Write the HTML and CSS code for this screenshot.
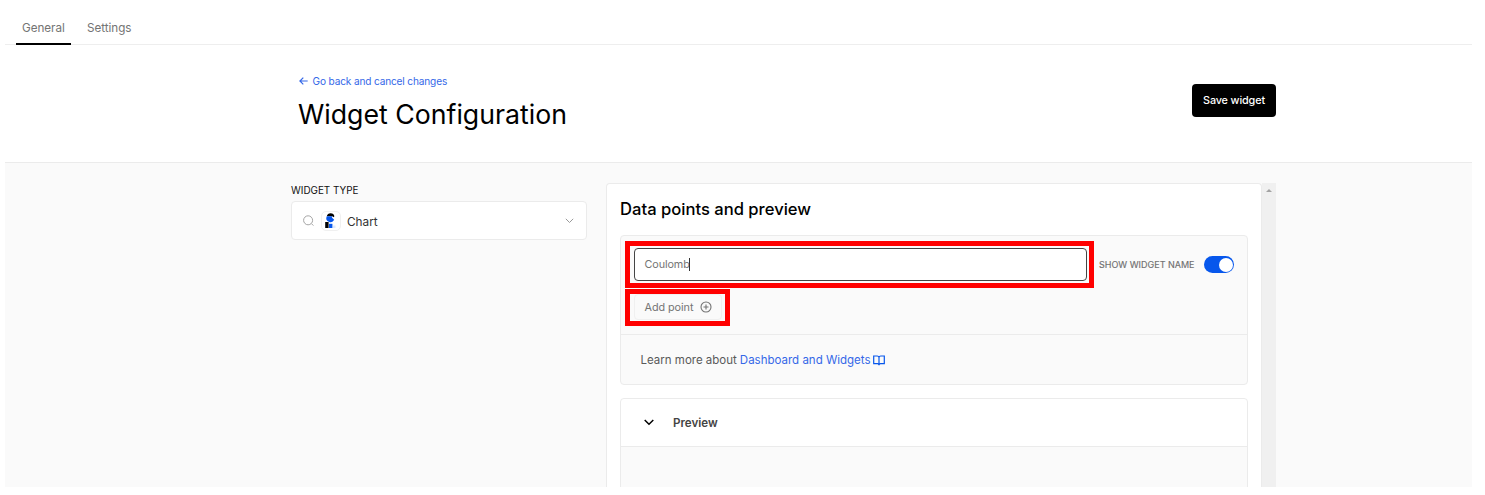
FILE: index.html
```html
<!DOCTYPE html>
<html lang="en">
<head>
<meta charset="utf-8">
<title>Widget Configuration</title>
<link rel="stylesheet" href="styles.css">
</head>
<body>
<div class="app">
  <nav class="tabs">
    <a class="tab active">General</a>
    <a class="tab">Settings</a>
  </nav>
  <header class="header">
    <div class="heading">
      <a class="back">
        <svg width="9" height="8" viewBox="0 0 9 8" fill="none" stroke="currentColor" stroke-width="1.2"><path d="M8.7 4H1M4.3.6L.9 4l3.4 3.4"/></svg>
        <span>Go back and cancel changes</span>
      </a>
      <h1>Widget Configuration</h1>
    </div>
    <button class="save">Save widget</button>
  </header>
  <main class="content">
    <aside class="side">
      <label class="label">WIDGET TYPE</label>
      <div class="select">
        <svg class="search" width="12" height="12" viewBox="0 0 12 12" fill="none" stroke="#a5a5a5"><circle cx="5.1" cy="5.3" r="4.5"/><path d="M8.4 8.6l2 2"/></svg>
        <span class="chart-icon">
          <svg width="18" height="18" viewBox="0 0 18 18"><path d="M4.8 4.2Q5.4 1.2 8.6 1.2T12.4 4.2L11.4 5.2 10.4 4.2z" fill="#000"/><path d="M4.8 4.2h5.6l-.6 1.4 2.4 2.2A4 4 0 0 1 4.8 4.2z" fill="#0757ec"/><path d="M3.2 10h3.4v6H3.2z" fill="#000"/><path d="M7 11.8h3.4V16H7z" fill="#0757ec"/><path d="M11 13.5h2.5V16H11z" fill="#dce9ff"/></svg>
        </span>
        <span class="select-text">Chart</span>
        <svg class="caret" width="9" height="6" viewBox="0 0 9 6" fill="none" stroke="#999"><path d="M.8.8l3.7 3.7L8.2.8"/></svg>
      </div>
    </aside>
    <section class="panel">
      <h2>Data points and preview</h2>
      <div class="card">
        <div class="editor">
          <div class="name-row">
            <div class="mark mark-input"><div class="input"><span>Coulomb</span><i class="cursor"></i></div></div>
            <span class="switch-label">SHOW WIDGET NAME</span>
            <span class="switch"><i class="knob"></i></span>
          </div>
          <div class="mark mark-button">
            <button class="add"><span>Add point</span>
              <svg width="12" height="12" viewBox="0 0 12 12" fill="none" stroke="#747474" stroke-width="1.1"><circle cx="6" cy="6" r="5"/><path d="M3.5 6h5M6 3.5v5"/></svg>
            </button>
          </div>
        </div>
        <div class="learn">
          <span class="learn-text">Learn more about</span>
          <a class="learn-link">Dashboard and Widgets</a>
          <svg width="12" height="11" viewBox="0 0 12 11" fill="none" stroke="#0757ec" stroke-width="1.2"><path d="M6 2.2C5.7 1.3 5.2 1 4.3 1H.7v7.7h3.8c.8 0 1.3.4 1.5 1.3.2-.9.7-1.3 1.5-1.3h3.8V1H7.7C6.8 1 6.3 1.3 6 2.2zM6 2.2V10"/></svg>
        </div>
      </div>
      <div class="card preview">
        <div class="preview-head">
          <svg width="10" height="7" viewBox="0 0 10 7" fill="none" stroke="#000" stroke-width="1.5"><path d="M.7 1L5 5.2 9.3 1"/></svg>
          <span>Preview</span>
        </div>
      </div>
    </section>
    <div class="scrollbar"><i class="arrow"></i></div>
  </main>
</div>
</body>
</html>
```

FILE: styles.css
```css
* { box-sizing: border-box; }
body { margin: 0; background: #fff; font-family: Inter, "Liberation Sans", sans-serif; color: #000; }
h1, h2 { margin: 0; }
button { font-family: inherit; border: 0; padding: 0; }
svg { display: block; flex: none; }
span { white-space: nowrap; }
.app { display: flex; flex-direction: column; margin: 0 13px 0 5px; height: 487px; overflow: hidden; }
.tabs { display: flex; flex: none; height: 45px; padding-left: 10.5px; gap: 10px; border-bottom: 1px solid #eee; }
.tab { height: 45px; padding: 20px 6.5px 0; font-size: 11.7px; line-height: 16px; letter-spacing: -.04px; color: #747474; }
.active { width: 55px; border-bottom: 2px solid #000; }
.header { display: flex; flex: none; justify-content: space-between; height: 118px; padding: 29px 196px 0 293px; border-bottom: 1px solid #ebebeb; }
.back { display: flex; align-items: center; gap: 4.6px; height: 14px; padding-left: 1px; font-size: 10.1px; letter-spacing: -.15px; color: #3568e8; }
h1 { margin-top: 8px; font-size: 26.7px; line-height: 36px; font-weight: 400; white-space: nowrap; }
.save { width: 84px; height: 33px; margin-top: 10px; padding-bottom: 1px; border-radius: 4px; background: #000; color: #fff; font-size: 10.8px; letter-spacing: -.12px; font-weight: 500; white-space: nowrap; }
.content { display: flex; flex: 1; min-height: 0; padding: 20px 0 0 286px; background: #fafafa; }
.side { width: 296px; margin-right: 19px; }
.label { display: block; height: 18px; line-height: 14px; font-size: 9.9px; color: #111; }
.select { display: flex; align-items: center; height: 39px; padding: 0 12px 0 11px; border: 1px solid #ebebeb; border-radius: 4px; background: #fff; }
.chart-icon { width: 20px; height: 20px; margin-left: 6px; border: 1px solid #f0f0f0; border-radius: 5px; }
.select-text { margin: 2px 0 0 6px; font-size: 11.8px; color: #333; }
.caret { margin-left: auto; }
.panel { width: 656px; padding: 15px 13px 0; border: 1px solid #ebebeb; border-bottom: 0; border-radius: 4px 4px 0 0; background: #fff; }
h2 { height: 36px; font-size: 16.6px; line-height: 20px; font-weight: 500; white-space: nowrap; }
.card { width: 628px; border: 1px solid #ebebeb; border-radius: 4px; background: #fafafa; }
.editor { height: 99px; padding: 5px 0 0 4px; border-bottom: 1px solid #ebebeb; }
.name-row { display: flex; align-items: center; }
.mark { border: 5px solid #f00; }
.mark-input { width: 469px; height: 47px; padding: 2px 0 0 4px; background: #fafafa; }
.input { display: flex; align-items: center; width: 453px; height: 33px; padding: 0 0 1px 9.5px; border: 1.5px solid #444; border-radius: 4px; background: #fff; font-size: 10.8px; letter-spacing: -.1px; color: #747474; }
.cursor { width: 1px; height: 13px; margin-left: -.5px; background: #333; }
.switch-label { width: 96px; margin-left: 5px; font-size: 9px; -webkit-text-stroke: .15px #707070; color: #707070; }
.switch { display: flex; justify-content: flex-end; width: 30px; height: 17px; margin-left: 9px; padding: 1.5px; border-radius: 9px; background: #0757ec; }
.knob { width: 14px; height: 14px; border-radius: 50%; background: #fff; }
.mark-button { width: 105px; height: 37px; margin-top: 1px; padding: 0 0 0 4px; }
.add { display: flex; align-items: center; gap: 6.5px; width: 88px; height: 26px; padding-left: 9.5px; border: 1px solid #f0f0f0; border-radius: 4px; background: #fafafa; font-size: 10.8px; letter-spacing: -.05px; color: #747474; }
.learn { display: flex; align-items: center; height: 49px; padding: 1px 0 0 19.5px; font-size: 11.5px; color: #595959; white-space: nowrap; }
.learn-link { margin: 0 2.6px 0 3px; color: #3568e8; }
.preview { height: 120px; margin-top: 13px; }
.preview-head { display: flex; align-items: center; height: 48px; padding-left: 23px; gap: 19px; border-bottom: 1px solid #ebebeb; border-radius: 4px 4px 0 0; background: #fff; font-size: 11.6px; font-weight: 600; color: #444; }
.scrollbar { width: 14px; padding: 6px 0 0 4px; background: #f0f0f0; }
.arrow { display: block; width: 0; border: 3px solid transparent; border-top: 0; border-bottom: 3.5px solid #a3a3a3; }
```
